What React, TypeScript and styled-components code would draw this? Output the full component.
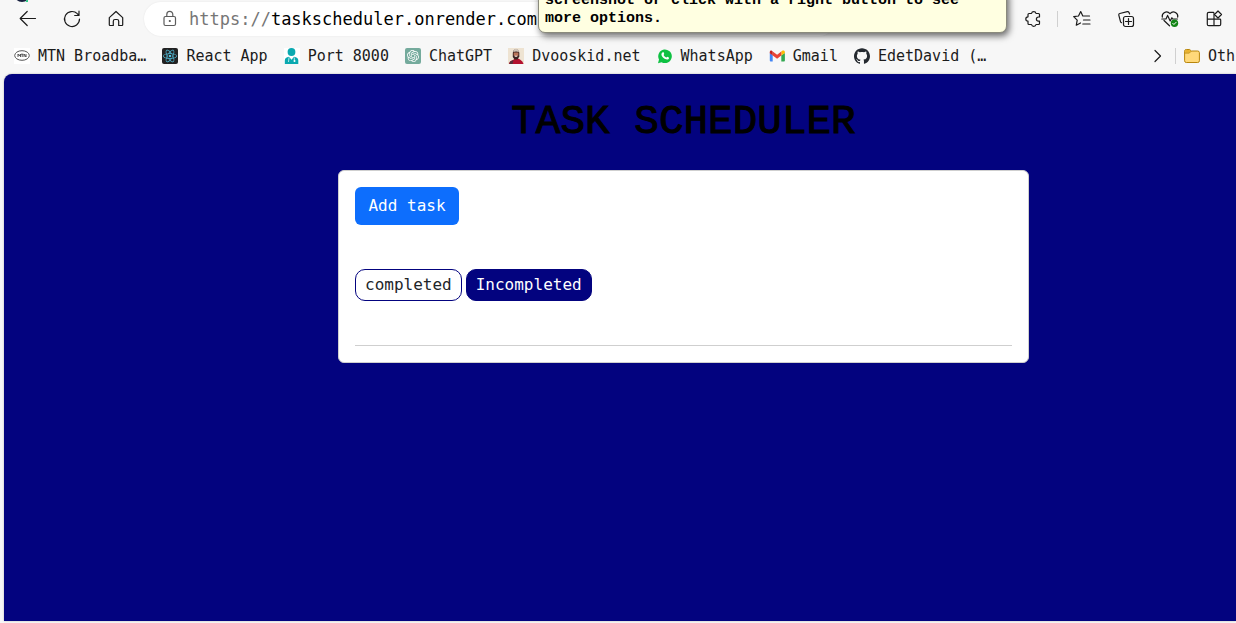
import React from 'react';
import styled, { createGlobalStyle } from 'styled-components';
import { SiReact, SiOpenai, SiWhatsapp, SiGithub } from 'react-icons/si';

const NAVY = '#03037f';

const GlobalStyle = createGlobalStyle`
  *, *::before, *::after { box-sizing: border-box; }
  body {
    margin: 0;
    background: #f7f7f7;
    font-family: 'DejaVu Sans Mono', 'Liberation Mono', monospace;
  }
`;

const Window = styled.div`
  position: relative;
  display: flex;
  flex-direction: column;
  min-height: 100vh;
  overflow: hidden;
`;

const Toolbar = styled.nav`
  display: flex;
  align-items: center;
  height: 38px;
  padding: 0 12px 0 18px;
`;

const IconButton = styled.button`
  display: flex;
  flex: none;
  align-items: center;
  justify-content: center;
  width: 20px;
  height: 20px;
  padding: 0;
  border: 0;
  background: none;
  color: #1b1b1b;
`;

const NavButtons = styled.div`
  display: flex;
  gap: 24px;
`;

const AddressBar = styled.div`
  display: flex;
  flex: 1;
  align-items: center;
  gap: 9px;
  min-width: 0;
  height: 34px;
  margin: 0 187px 0 18px;
  padding: 0 16px;
  border-radius: 17px;
  background: #fff;
  box-shadow: 0 0 2px rgba(0, 0, 0, 0.08);
`;

const Address = styled.div`
  overflow: hidden;
  color: #000;
  font-size: 17px;
  line-height: 24px;
  white-space: nowrap;
`;

const Scheme = styled.span`
  color: #767676;
`;

const Tools = styled.div`
  display: flex;
  align-items: center;
  gap: 24px;
`;

const Divider = styled.span`
  flex: none;
  width: 1px;
  height: 16px;
  background: #d0d0d0;
`;

const ExtensionGroup = styled.div`
  display: flex;
  align-items: center;
  gap: 14px;
  margin-right: -10px;
`;

const BookmarkBar = styled.nav`
  display: flex;
  align-items: center;
  height: 36px;
  padding-left: 14px;
`;

const Bookmarks = styled.div`
  display: flex;
  flex: 1;
  gap: 16px;
  min-width: 0;
  overflow: hidden;
`;

const Bookmark = styled.a`
  display: flex;
  flex: none;
  align-items: center;
  gap: 8px;
  color: #1b1b1b;
  font-size: 15px;
  line-height: 20px;
  text-decoration: none;
  white-space: nowrap;
`;

const Tile = styled.span<{ $bg: string; $fg: string }>`
  display: flex;
  align-items: center;
  justify-content: center;
  width: 16px;
  height: 16px;
  border-radius: 2px;
  background: ${(p) => p.$bg};
  color: ${(p) => p.$fg};
`;

const Overflow = styled.div`
  display: flex;
  flex: none;
  align-items: center;
  gap: 8px;
  padding-right: 1px;
`;

const Tooltip = styled.div`
  position: absolute;
  z-index: 2;
  top: -9px;
  left: 538px;
  width: 469px;
  padding: 0 6px 4px;
  border: 1px solid #8a8a7c;
  border-radius: 0 0 7px 7px;
  background: #ffffe1;
  box-shadow: 2px 3px 7px rgba(0, 0, 0, 0.6);
  color: #000;
  font: bold 15px/18px 'Liberation Mono', monospace;
`;

const Avatar = styled.svg`
  position: absolute;
  top: -14px;
  left: 14px;
`;

const Page = styled.main`
  display: grid;
  flex: 1;
  grid-template-columns: 334fr 691fr 207fr;
  align-content: start;
  margin: 0 0 2px 4px;
  padding-top: 24px;
  border-radius: 8px 0 0 0;
  background: ${NAVY};
  box-shadow: 0 0 2px rgba(0, 0, 0, 0.3);
`;

const Column = styled.div`
  grid-column: 2;
  min-width: 0;
`;

const Title = styled.h1`
  margin: 0 0 24px;
  color: #000;
  font: normal 41px/48px 'Liberation Mono', monospace;
  -webkit-text-stroke: 1px #000;
  text-align: center;
  white-space: nowrap;
`;

const Card = styled.section`
  display: flex;
  flex-direction: column;
  align-items: flex-start;
  gap: 44px;
  padding: 16px;
  border: 1px solid #cfcfcf;
  border-radius: 6px;
  background: #fff;
`;

const AddButton = styled.button`
  min-width: 104px;
  height: 38px;
  padding: 0 12px;
  border: 0;
  border-radius: 6px;
  background: #0d6efd;
  color: #fff;
  font: 16px/24px 'DejaVu Sans Mono', monospace;
`;

const Filters = styled.div`
  display: flex;
  gap: 4px;
`;

const FilterButton = styled.button<{ $active?: boolean }>`
  height: 32px;
  padding: 0 9px;
  border: 1px solid ${NAVY};
  border-radius: 10px;
  background: ${(p) => (p.$active ? NAVY : '#fff')};
  color: ${(p) => (p.$active ? '#fff' : '#212529')};
  font: 16px/24px 'DejaVu Sans Mono', monospace;
`;

const Rule = styled.hr`
  width: 100%;
  margin: 0;
  border: 0;
  border-top: 1px solid #cfcfcf;
`;

const Line = ({ children, size = 20, color = 'currentColor' }: { children: React.ReactNode; size?: number; color?: string }) => (
  <svg width={size} height={size} viewBox={`0 0 ${size} ${size}`} fill="none" stroke={color} strokeWidth="1.2" strokeLinecap="round" strokeLinejoin="round" aria-hidden="true">
    {children}
  </svg>
);

const MtnIcon = () => (
  <svg width="16" height="16" viewBox="0 0 16 16" aria-hidden="true">
    <rect width="16" height="16" fill="#fff" />
    <ellipse cx="8" cy="7.5" rx="7.3" ry="4.8" fill="none" stroke="#555" />
    <path d="M4 9V6l1.3 1.8L6.5 6v3M7 6.2h2.4M8.2 6.2V9M10 9V6l2 3V6" fill="none" stroke="#444" strokeWidth=".9" />
  </svg>
);

const PersonIcon = () => (
  <svg width="16" height="16" viewBox="0 0 16 16" aria-hidden="true">
    <rect width="16" height="16" fill="#fff" />
    <circle cx="7.500" cy="4" r="3.900" fill="#0aa9b0" />
    <path d="M.8 16v-3.500Q.8 9.300 5 8.700l2.500 3L10 8.700q4.300.6 4.300 3.800V16Z" fill="#0aa9b0" />
    <path d="M5 9.500 4.500 14M10.300 9.500v3" stroke="#fff" strokeWidth=".7" />
    <circle cx="10.500" cy="13" r="1" fill="#fff" />
  </svg>
);

const PortraitIcon = () => (
  <svg width="16" height="16" viewBox="0 0 16 16" aria-hidden="true">
    <rect width="16" height="16" fill="#eee3d2" />
    <path d="M1 16q0-2.500 4-4l2-1.500h3l2 1q3 1.500 3.500 4.500Z" fill="#b3122f" />
    <path d="M4.800 5.500Q4.800 1.500 8 1.300q3.300.2 3.300 4.200v3L9.500 11.500H6.500L4.800 9Z" fill="#3a2220" />
    <path d="M5.700 4.500h4.700v3L8 8.800 5.700 7.500Z" fill="#b9745a" />
    <path d="M5.300 4Q8 2.800 10.900 4l-.2-1.800Q8-.6 5.500 2.200Z" fill="#cfc3b8" />
    <path d="M6.700 8.200h2.600" stroke="#fff" strokeWidth=".9" fill="none" />
    <path d="M2 13.500 5.500 12l-1 4H1.500Z" fill="#54303a" />
  </svg>
);

const GmailIcon = () => (
  <svg width="16" height="16" viewBox="0 0 16 16" aria-hidden="true">
    <path d="M1 13.500h2.700V7.300L.8 5v7.500q0 1 .9 1Z" fill="#4285f4" />
    <path d="M12.300 13.500H15q.9 0 .9-1V5l-3.600 2.300Z" fill="#34a853" />
    <path d="M12.300 3.600v3.900L15.900 5V4c0-1.500-1.600-2.100-2.700-1.200Z" fill="#fbbc04" />
    <path d="M3.700 7.400V3.500L8.100 6.800l4.200-3.200v3.800L8.100 10.700Z" fill="#ea4335" />
    <path d="M.8 4.200V5.200l2.900 2.300V3.600l-.9-.8C1.900 2.100.8 2.700.8 4.200Z" fill="#c5221f" />
  </svg>
);

const FolderIcon = () => (
  <svg width="16" height="16" viewBox="0 0 16 16" aria-hidden="true">
    <path d="M.6 3.200q0-1.700 1.700-1.700h3.400l1.600 1.500h6.400q1.700 0 1.700 1.700v8.100q0 1.700-1.700 1.700H2.300q-1.700 0-1.700-1.700Z" fill="#ffd97a" stroke="#b8860b" />
    <path d="M1.100 3.200Q1.100 2 2.300 2h3.200l1.400 1.300-1.500 1.500H1.100Z" fill="#e9b22e" />
    <path d="M.8 5.100h4.500l2-2" fill="none" stroke="#b8860b" strokeWidth=".8" />
  </svg>
);

const WhatsAppIcon = () => (
  <Tile $bg="transparent" $fg="#0fc143">
    <svg width="16" height="16" viewBox="0 0 16 16" aria-hidden="true">
      <path d="M1 15.200 2 11.500A6.800 6.800 0 1 1 4.600 14.200Z" fill="currentColor" />
      <path d="M5.500 4.400c.6-.5 1-.3 1.200.2l.5 1.200c.2.500-.6 1-.6 1.200.5 1.200 1.500 2.100 2.600 2.500.3.100.8-.9 1.200-.8l1.400.7c.5.300.1 1.400-.5 1.800C9 12.500 4.300 9.200 4.400 6.300c0-.8.500-1.400 1.100-1.900Z" fill="#fff" />
    </svg>
  </Tile>
);

const bookmarks: { label: string; icon: React.ReactNode }[] = [
  { label: 'MTN Broadba…', icon: <MtnIcon /> },
  { label: 'React App', icon: <Tile $bg="#222" $fg="#53c1de"><SiReact size={14} /></Tile> },
  { label: 'Port 8000', icon: <PersonIcon /> },
  { label: 'ChatGPT', icon: <Tile $bg="#74aa9c" $fg="#fff"><SiOpenai size={12} /></Tile> },
  { label: 'Dvooskid.net', icon: <PortraitIcon /> },
  { label: 'WhatsApp', icon: <WhatsAppIcon /> },
  { label: 'Gmail', icon: <GmailIcon /> },
  { label: 'EdetDavid (…', icon: <SiGithub size={16} color="#24292f" /> },
];

export default function App() {
  return (
    <Window>
      <GlobalStyle />
      <Avatar width="16" height="16" viewBox="0 0 16 16" aria-hidden="true">
        <circle cx="8" cy="8" r="8" fill="#17203f" />
        <path d="M11.500 16 14 12v4Z" fill="#2fd08a" />
      </Avatar>
      <Toolbar aria-label="Browser">
        <NavButtons>
          <IconButton aria-label="Back">
            <Line><path d="M17.500 9.500h-15M9.200 2.500l-7 7 7 7" /></Line>
          </IconButton>
          <IconButton aria-label="Refresh">
            <Line><path d="M17.500 10A7.500 7.500 0 1 1 15.300 4.700L17 6.300M17 2.200v4.300h-4.300" /></Line>
          </IconButton>
          <IconButton aria-label="Home">
            <Line><path d="M3.300 8.600 10 2.500l6.700 6.100v7.200q0 .7-.7.700h-3.300v-4.300q0-1.700-1.700-1.700H9q-1.700 0-1.700 1.700v4.300H4q-.7 0-.7-.7Z" /></Line>
          </IconButton>
        </NavButtons>
        <AddressBar>
          <Line color="#5c5c5c">
            <rect x="4" y="7.500" width="11.500" height="9" rx="1.500" />
            <path d="M6.800 7.300V5.400a3 3 0 0 1 6 0v1.900" />
            <circle cx="9.800" cy="12" r=".5" fill="#5c5c5c" />
          </Line>
          <Address><Scheme>https://</Scheme>taskscheduler.onrender.com</Address>
        </AddressBar>
        <Tools>
          <ExtensionGroup>
            <IconButton aria-label="Extensions">
              <Line><path d="M8.500 4.500a2.300 2.300 0 0 1 4.500 0h2.500q1 0 1 1V8h-1a2 2 0 0 0 0 4.200h1v2.300q0 1-1 1H13a2.300 2.300 0 0 1-4.500 0H6q-1 0-1-1v-2.300a2.200 2.200 0 0 1 0-4.400V5.500q0-1 1-1Z" /></Line>
            </IconButton>
            <Divider />
          </ExtensionGroup>
          <IconButton aria-label="Favorites">
            <Line><path d="M8.500 14 4.300 16.200l.9-5L1.700 7.700 6.500 7 8.700 2.600 10.800 7H17.500M11.500 11H18M10.800 15H18" /></Line>
          </IconButton>
          <IconButton aria-label="Collections">
            <Line>
              <rect x="7.500" y="7.500" width="10" height="10" rx="2" />
              <path d="M12.500 9.500v6M9.500 12.500h6M13.600 5 13 3.600q-.5-1.200-1.700-.9L3.800 4.500q-1.300.3-1 1.600l1.700 6.500q.2 1 1 1.100" />
            </Line>
          </IconButton>
          <IconButton aria-label="Browser essentials">
            <Line>
              <path d="M2.300 8.200C1.500 4.500 6.500.8 10 4.700c3.500-3.900 8.500-.2 7.700 3.500M4 11.500l5.500 5.300M1.800 10H6l1.600-3.600L10.200 12l1.700-3.300.7 1.300h4.800" />
              <circle cx="14.500" cy="14.300" r="3.700" fill="#138516" stroke="none" />
              <path d="m12.700 14.300 1.200 1.200 2.300-2.300" stroke="#fff" strokeWidth="1" />
            </Line>
          </IconButton>
          <IconButton aria-label="Apps">
            <Line><path d="M9.500 3.300H4.800q-1.500 0-1.500 1.500v10.400q0 1.500 1.500 1.500h10.400q1.500 0 1.500-1.500V11q0-.8-.8-.8H3.300M10 3.800v12.900" /><path d="m14 2 3.500 3.500L14 9l-3.500-3.500Z" /></Line>
          </IconButton>
        </Tools>
      </Toolbar>
      <BookmarkBar aria-label="Favorites bar">
        <Bookmarks>
          {bookmarks.map((b) => (
            <Bookmark href="#" key={b.label}>{b.icon}{b.label}</Bookmark>
          ))}
        </Bookmarks>
        <Overflow>
          <IconButton aria-label="More favorites">
            <Line><path d="m8 4.500 5.500 5.500L8 15.500" /></Line>
          </IconButton>
          <Divider />
          <Bookmark href="#"><FolderIcon />Oth</Bookmark>
        </Overflow>
      </BookmarkBar>
      <Page>
        <Column>
          <Title>TASK SCHEDULER</Title>
          <Card>
            <AddButton>Add task</AddButton>
            <Filters>
              <FilterButton>completed</FilterButton>
              <FilterButton $active>Incompleted</FilterButton>
            </Filters>
            <Rule />
          </Card>
        </Column>
      </Page>
      <Tooltip role="tooltip">screenshot or click with a right button to see more options.</Tooltip>
    </Window>
  );
}
